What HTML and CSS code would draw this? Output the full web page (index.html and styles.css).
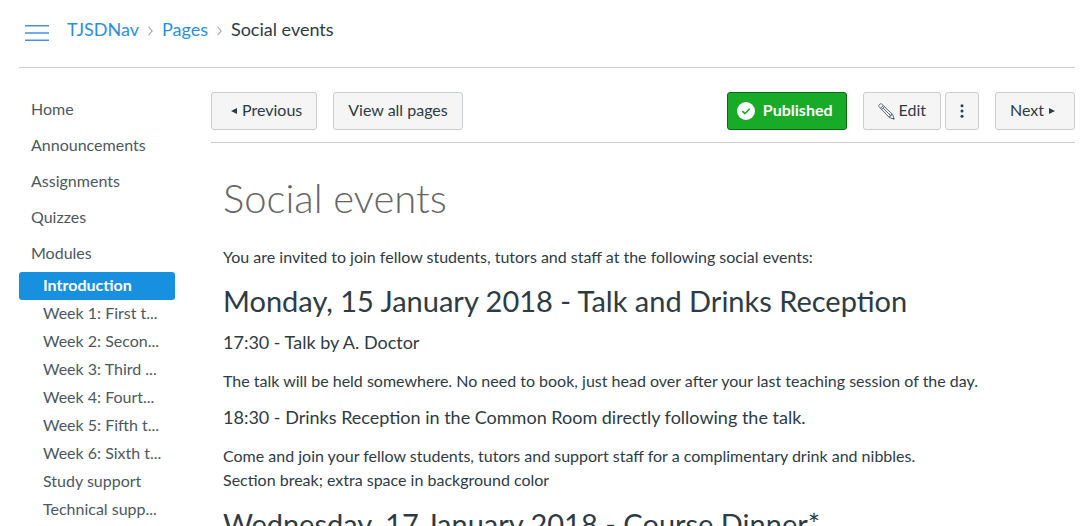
FILE: index.html
```html
<!DOCTYPE html>
<html lang="en">
<head>
<meta charset="utf-8">
<title>Social events</title>
<link rel="stylesheet" href="styles.css">
</head>
<body>
<header class="top-bar">
  <button class="menu-toggle" type="button" aria-label="Toggle course navigation">
    <svg class="menu-icon" width="24" height="16" viewBox="0 0 24 16" aria-hidden="true"><path d="M0 .7h24M0 8h24M0 15.3h24" stroke="#4a90e2" stroke-width="1.5"/></svg>
  </button>
  <nav class="breadcrumbs" aria-label="Breadcrumbs">
    <a href="#">TJSDNav</a>
    <svg class="crumb-arrow" width="5" height="10" viewBox="0 0 5 10" aria-hidden="true"><path d="M.5.8 4.3 5 .5 9.2" fill="none" stroke="#7b858c"/></svg>
    <a href="#">Pages</a>
    <svg class="crumb-arrow" width="5" height="10" viewBox="0 0 5 10" aria-hidden="true"><path d="M.5.8 4.3 5 .5 9.2" fill="none" stroke="#7b858c"/></svg>
    <span>Social events</span>
  </nav>
</header>
<div class="layout">
  <nav class="course-nav" aria-label="Course">
    <a class="section" href="#">Home</a>
    <a class="section" href="#">Announcements</a>
    <a class="section" href="#">Assignments</a>
    <a class="section" href="#">Quizzes</a>
    <a class="section" href="#">Modules</a>
    <a class="module active" href="#" aria-current="page">Introduction</a>
    <a class="module" href="#">Week 1: First t...</a>
    <a class="module" href="#">Week 2: Secon...</a>
    <a class="module" href="#">Week 3: Third ...</a>
    <a class="module" href="#">Week 4: Fourt...</a>
    <a class="module" href="#">Week 5: Fifth t...</a>
    <a class="module" href="#">Week 6: Sixth t...</a>
    <a class="module" href="#">Study support</a>
    <a class="module" href="#">Technical supp...</a>
  </nav>
  <main class="page">
    <div class="toolbar">
      <a class="btn previous" href="#"><svg width="6" height="6" viewBox="0 0 6 6" aria-hidden="true"><path d="M6 0v6L0 3z" fill="#2d3b45"/></svg>Previous</a>
      <a class="btn" href="#">View all pages</a>
      <div class="actions">
        <button class="btn published" type="button"><svg width="18" height="18" viewBox="0 0 18 18" aria-hidden="true"><circle cx="9" cy="9" r="9" fill="#fff"/><path d="m5.3 9.2 2.6 2.5 4.8-4.9" fill="none" stroke="#18ab27" stroke-width="1.6"/></svg>Published</button>
        <div class="edit-group">
          <a class="btn edit" href="#"><svg width="17" height="17" viewBox="0 0 17 17" aria-hidden="true"><path d="M.8 3.4Q.4 2.8 1 2.1L2.1 1Q2.8.4 3.5.9L14.6 11.4 16.2 16.2 11.4 14.6zM2.6 5.2 5.2 2.6M3.8 6.4 6.4 3.8M5.1 5.1l7.9 7.9M11.4 14.6l.3-1.7 1.3.1-.1-1.3 1.7-.3" fill="none" stroke="#5f6a72" stroke-linejoin="round"/><path d="m14.4 15.6 1.8.6-.6-1.8z" fill="#2d3b45"/></svg>Edit</a>
          <button class="btn more" type="button" aria-label="More options"><svg width="4" height="14" viewBox="0 0 4 14" aria-hidden="true"><g fill="#2d3b45"><circle cx="2" cy="1.7" r="1.5"/><circle cx="2" cy="7" r="1.5"/><circle cx="2" cy="12.3" r="1.5"/></g></svg></button>
        </div>
        <a class="btn next" href="#">Next<svg width="6" height="6" viewBox="0 0 6 6" aria-hidden="true"><path d="M0 0v6l6-3z" fill="#2d3b45"/></svg></a>
      </div>
    </div>
    <article class="content">
      <h1>Social events</h1>
      <p>You are invited to join fellow students, tutors and staff at the following social events:</p>
      <h2>Monday, 15 January 2018 - Talk and Drinks Reception</h2>
      <h3>17:30 - Talk by A. Doctor</h3>
      <p>The talk will be held somewhere. No need to book, just head over after your last teaching session of the day.</p>
      <h3>18:30 - Drinks Reception in the Common Room directly following the talk.</h3>
      <p>Come and join your fellow students, tutors and support staff for a complimentary drink and nibbles.<br>Section break; extra space in background color</p>
      <h2>Wednesday, 17 January 2018 - Course Dinner*</h2>
    </article>
  </main>
</div>
</body>
</html>
```
FILE: styles.css
```css
* { box-sizing: border-box; }

html { overflow: hidden; }

body {
  margin: 0;
  padding: 0 17px 0 19px;
  background: #fff;
  color: #2d3b45;
  font: 16px/24px Lato, sans-serif;
}

a { color: inherit; text-decoration: none; }

.top-bar {
  display: flex;
  align-items: flex-start;
  gap: 18px;
  padding: 17px 6px 26px;
  border-bottom: 1px solid #c7cdd1;
}

.menu-toggle {
  display: flex;
  padding: 8px 0 0;
  border: 0;
  background: none;
}

.breadcrumbs {
  display: flex;
  align-items: center;
  gap: 9px;
  font-size: 18px;
}

.breadcrumbs a { color: #2b8fe0; }

.crumb-arrow { margin-top: 4px; }

.layout {
  display: flex;
  gap: 36px;
  padding-top: 24px;
}

.course-nav {
  display: flex;
  flex-direction: column;
  flex: 0 0 156px;
  min-width: 0;
  color: #4c5860;
}

.section { padding: 5px 12px 7px; }

.module {
  padding: 1px 12px 3px 24px;
  border-radius: 3px;
  white-space: nowrap;
}

.module.active {
  background: #1790df;
  color: #fff;
  font-weight: 700;
}

.page { flex: 1; min-width: 0; }

.toolbar {
  display: flex;
  gap: 16px;
  padding-bottom: 12px;
  border-bottom: 1px solid #c7cdd1;
}

.btn {
  display: inline-flex;
  align-items: center;
  gap: 5px;
  padding: 5px 14px 7px;
  border: 1px solid #c7cdd1;
  border-radius: 3px;
  background: #f5f5f5;
  color: #2d3b45;
  font: inherit;
  white-space: nowrap;
}

.btn svg { margin-top: 2px; }

.btn.previous { padding-left: 19px; }

.btn.next { padding-right: 19px; }

.btn.edit { gap: 4px; }

.btn.more { padding: 6px 14px 8px; }

.btn.published {
  gap: 8px;
  padding-left: 9px;
  padding-right: 13px;
  border-color: #0b6b15;
  background: #18ab27;
  color: #fff;
  font-weight: 700;
}

.actions {
  display: flex;
  gap: 16px;
  margin-left: auto;
}

.edit-group { display: flex; gap: 4px; }

.content { padding: 31px 12px; }

h1, h2, h3, p { margin: 0; }

h1 {
  margin-bottom: 23px;
  color: #666;
  font-size: 40px;
  font-weight: 300;
  line-height: 48px;
}

h2 {
  margin: 12px 0 8px;
  font-size: 29px;
  font-weight: 400;
  line-height: 40px;
}

h3 {
  margin: 11px 0 14px;
  font-size: 18px;
  font-weight: 400;
  line-height: 26px;
}

h2 + h3 { margin-top: 8px; }

p { margin: 12px 0; }

p:has(+ h3) { margin-bottom: 11px; }
```
